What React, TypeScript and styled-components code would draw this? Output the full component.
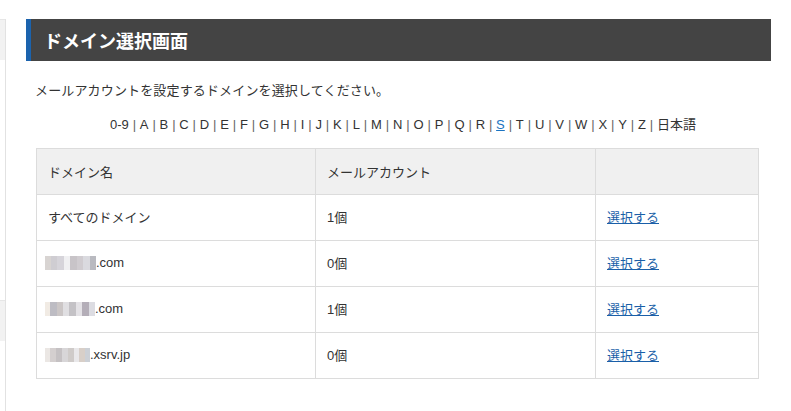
import styled, { createGlobalStyle } from 'styled-components';

const GlobalStyle = createGlobalStyle`
  html, body {
    margin: 0;
    padding: 0;
    background: #fff;
  }
  body {
    font-family: "Liberation Sans", "Noto Sans CJK JP", sans-serif;
    font-size: 13px;
    color: #333;
  }
`;

const Page = styled.div`
  display: flex;
  min-height: 411px;
`;

const Sidebar = styled.div`
  flex: 0 0 5px;
  margin-top: 19px;
  border-right: 1px solid #e2e2e2;
  display: flex;
  flex-direction: column;
`;

const SideItem = styled.div<{ $gap?: number }>`
  height: 40px;
  margin-top: ${(p) => p.$gap ?? 0}px;
  background: #f2f2f2;
  border-top: 1px solid #e6e6e6;
`;

const Main = styled.div`
  flex: 1;
  min-width: 0;
  padding: 19px 20px 0 20px;
`;

const TitleBar = styled.h2`
  margin: 0;
  height: 42px;
  display: flex;
  align-items: center;
  padding-left: 13px;
  background: #444;
  border-left: 5px solid #1b63ad;
  color: #fff;
  font-family: "Noto Sans CJK JP", sans-serif;
  font-size: 18px;
  font-weight: 700;
`;

const Body = styled.div`
  padding: 0 13px 0 9px;
`;

const Lead = styled.p`
  margin: 20px 0 0 0;
  font-family: "Noto Sans CJK JP", sans-serif;
  font-size: 13px;
  line-height: 18px;
  letter-spacing: 0.15px;
`;

const Letters = styled.div`
  margin-top: 17px;
  text-align: center;
  font-size: 13px;
  line-height: 18px;
  padding-left: 13px;
`;

const Letter = styled.span<{ $active?: boolean }>`
  color: ${(p) => (p.$active ? '#1a73c2' : '#333')};
  text-decoration: ${(p) => (p.$active ? 'underline' : 'none')};
  font-family: "Liberation Sans", "Noto Sans CJK JP", sans-serif;
`;

const Sep = styled.span`
  color: #666;
  margin: 0 3.85px;
`;

const Table = styled.table`
  margin: 14px 0 0 1px;
  width: 722px;
  border-collapse: collapse;
  table-layout: fixed;
`;

const Th = styled.th<{ $w: number }>`
  box-sizing: border-box;
  width: ${(p) => p.$w}px;
  height: 46px;
  padding: 0 0 0 11px;
  background: #f0f0f0;
  border: 1px solid #dcdcdc;
  text-align: left;
  font-weight: 400;
  font-family: "Noto Sans CJK JP", sans-serif;
  font-size: 13px;
  color: #333;
`;

const Td = styled.td`
  height: 43px;
  padding: 0 0 2px 11px;
  border: 1px solid #dcdcdc;
  font-size: 13px;
  color: #333;
  font-family: "Liberation Sans", "Noto Sans CJK JP", sans-serif;
`;

const SelectLink = styled.a`
  color: #1a5fa8;
  text-decoration: underline;
  font-family: "Noto Sans CJK JP", sans-serif;
  cursor: pointer;
`;

const Blur = styled.span`
  display: inline-flex;
  vertical-align: middle;
  height: 14px;
  margin-left: -3px;
`;

const Pix = styled.span<{ $c: string; $w: number }>`
  flex: 0 0 ${(p) => p.$w}px;
  height: 100%;
  background: ${(p) => p.$c};
`;

const blurSets: Record<string, [string, number][]> = {
  a: [
    ['#d8d4d2', 6], ['#cfcdd2', 6], ['#d6d4da', 7], ['#f0f0f2', 6],
    ['#c8c4c8', 7], ['#d0ccd0', 6], ['#dadadf', 7], ['#b9bac0', 6],
  ],
  b: [
    ['#f1ebe4', 5], ['#bdbcc3', 7], ['#cbc6c6', 6], ['#e0dfe2', 6],
    ['#c4c2c6', 7], ['#e4e2e6', 6], ['#b4aeb8', 7], ['#dcdce2', 6],
  ],
  c: [
    ['#ebe7e4', 5], ['#d4cfcf', 6], ['#c5c1c3', 6], ['#d8d6d8', 6],
    ['#cfcbc9', 6], ['#e9e8ea', 5], ['#d8cfc8', 6], ['#ccd0d6', 5],
  ],
};

const alphabet = ['0-9', ...'ABCDEFGHIJKLMNOPQRSTUVWXYZ'.split(''), '日本語'];

const rows = [
  { blur: '', name: 'すべてのドメイン', count: '1個' },
  { blur: 'a', name: '.com', count: '0個' },
  { blur: 'b', name: '.com', count: '1個' },
  { blur: 'c', name: '.xsrv.jp', count: '0個' },
];

export default function App() {
  return (
    <>
      <GlobalStyle />
      <Page>
        <Sidebar>
          <SideItem />
          <SideItem $gap={240} />
        </Sidebar>
        <Main>
          <TitleBar>ドメイン選択画面</TitleBar>
          <Body>
            <Lead>メールアカウントを設定するドメインを選択してください。</Lead>
            <Letters>
              {alphabet.map((l, i) => (
                <span key={l}>
                  {i > 0 && <Sep>|</Sep>}
                  <Letter $active={l === 'S'}>{l}</Letter>
                </span>
              ))}
            </Letters>
            <Table>
              <thead>
                <tr>
                  <Th $w={279}>ドメイン名</Th>
                  <Th $w={280}>メールアカウント</Th>
                  <Th $w={163}></Th>
                </tr>
              </thead>
              <tbody>
                {rows.map((r, i) => (
                  <tr key={i}>
                    <Td>
                      {r.blur && (
                        <Blur>
                          {blurSets[r.blur].map(([c, w], j) => (
                            <Pix key={j} $c={c} $w={w} />
                          ))}
                        </Blur>
                      )}
                      {r.name}
                    </Td>
                    <Td>{r.count}</Td>
                    <Td>
                      <SelectLink>選択する</SelectLink>
                    </Td>
                  </tr>
                ))}
              </tbody>
            </Table>
          </Body>
        </Main>
      </Page>
    </>
  );
}
